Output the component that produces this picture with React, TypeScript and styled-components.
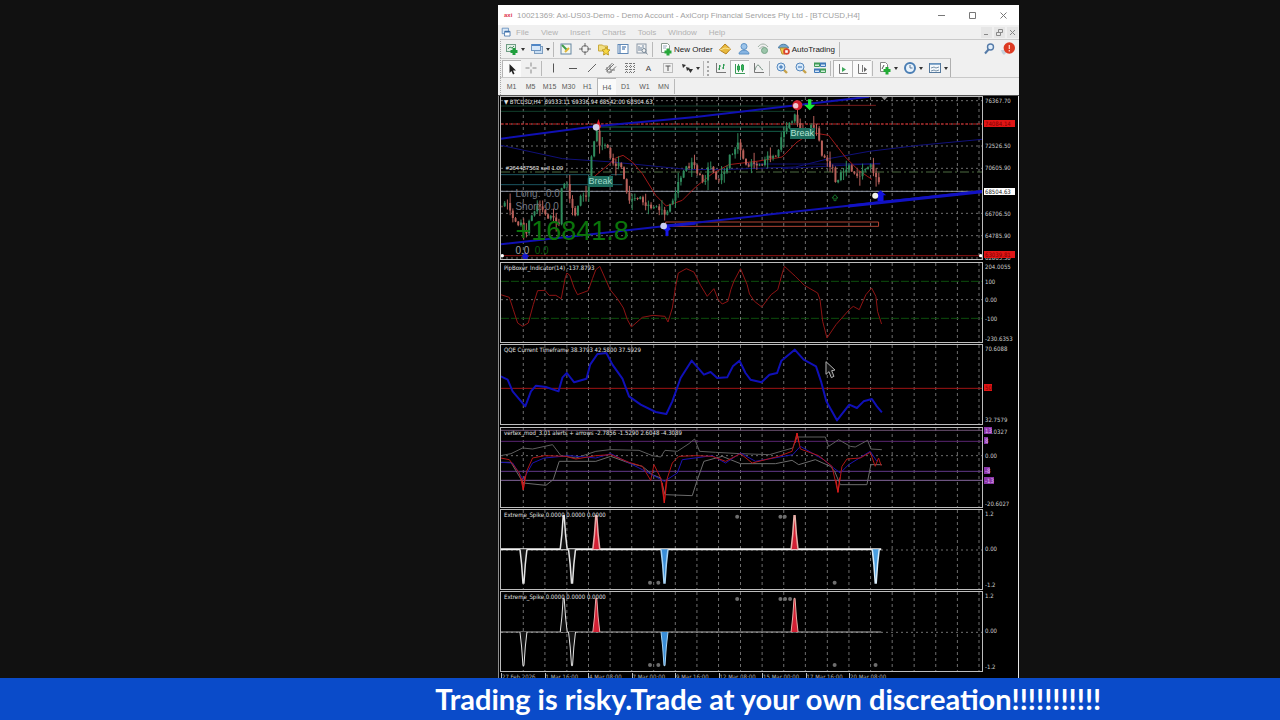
import React from "react";
import styled, { createGlobalStyle, css } from "styled-components";

const GlobalStyle = createGlobalStyle`
  * { box-sizing: border-box; }
  html, body, #root { height: 100%; }
  body { margin: 0; background: #111111; font-family: "Liberation Sans", Arial, sans-serif; }
  button { font: inherit; color: inherit; background: none; border: 0; padding: 0; margin: 0; }
`;

const UI_TEXT = "#444444";

const Screen = styled.div`
  display: flex;
  flex-direction: column;
  height: 100vh;
  overflow: hidden;
  background: #111111;
`;

const Stage = styled.main`
  flex: 1;
  min-height: 0;
  overflow: hidden;
  display: grid;
  grid-template-columns: 498fr 521fr 261fr;
  align-items: start;
  padding-top: 5px;
`;

const Terminal = styled.section`
  grid-column: 2;
  min-width: 0;
  background: #f0f0f0;
  color: ${UI_TEXT};
  font-size: 8px;
`;

const TitleBar = styled.header`
  display: flex;
  align-items: center;
  height: 20px;
  padding-left: 6px;
  background: #ffffff;
  color: #a2a2a2;
`;

const Brand = styled.span`
  width: 13px;
  font-size: 6px;
  font-weight: bold;
  color: #e0374f;
`;

const Title = styled.h1`
  flex: 1;
  margin: 0;
  font-size: 8px;
  font-weight: normal;
  white-space: nowrap;
`;

const WindowButton = styled.button`
  width: 31px;
  height: 20px;
  display: grid;
  place-items: center;
`;

const MenuBar = styled.nav`
  display: flex;
  align-items: center;
  gap: 12px;
  height: 14px;
  padding: 0 1px 0 3px;
  color: #b2b2b2;
`;

const MenuIcon = styled.span`
  display: grid;
  margin-right: -8px;
`;

const ChildButtons = styled.div`
  display: flex;
  gap: 2px;
  margin-left: auto;
`;

const ChildButton = styled.button`
  width: 11px;
  height: 11px;
  display: grid;
  place-items: center;
  background: #e6e6e6;
`;

const Toolbar = styled.div<{ $short?: boolean; $height: number }>`
  display: flex;
  align-items: center;
  height: ${(p) => p.$height}px;
  margin-left: 2px;
  border-top: 1px solid #c9c9c9;
  border-left: 1px dotted #a8a8a8;
  padding-left: 1px;
  ${(p) =>
    p.$short &&
    css`
      width: fit-content;
      border-right: 1px solid #b0b0b0;
    `}
`;

const Tool = styled.button<{ $pressed?: boolean; $width?: number }>`
  flex: none;
  display: flex;
  align-items: center;
  justify-content: center;
  gap: 1px;
  width: ${(p) => p.$width ?? 19}px;
  height: 17px;
  white-space: nowrap;
  ${(p) =>
    p.$pressed &&
    css`
      background: #fafafa;
      border-left: 1px solid #b5b5b5;
      border-top: 1px solid #b5b5b5;
    `}
`;

const TextTool = styled(Tool)`
  width: auto;
  padding: 0 3px 0 4px;
  color: #1a1a1a;
`;

const Divider = styled.span`
  flex: none;
  width: 1px;
  height: 15px;
  margin: 0 2px 0 1px;
  background: #b9b9b9;
`;

const Grip = styled.span`
  flex: none;
  height: 15px;
  margin: 0 2px 0 1px;
  border-left: 2px dotted #a8a8a8;
`;

const Caret = styled.span`
  width: 0;
  height: 0;
  margin-left: 1px;
  border: 2px solid transparent;
  border-top: 3px solid #333333;
  border-bottom: 0;
`;

const ToolEnd = styled.div`
  display: flex;
  margin-left: auto;
  padding-right: 2px;
`;

const Period = styled(Tool)`
  font-size: 7px;
  color: #5a5a5a;
`;

const Charts = styled.div`
  display: flex;
  flex-direction: column;
  gap: 1px;
  padding: 0 1px 0 2px;
  background: #000000;
  border-left: 1px solid #8d8d8d;
  border-right: 1px solid #e8e8e8;
  color: #e2e2e2;
  font: 6px/8px "DejaVu Sans Condensed", "DejaVu Sans", sans-serif;
`;

const ChartsFrame = styled.div`
  border-top: 1px solid #555555;
`;

const Pane = styled.figure<{ $gap?: boolean }>`
  margin: 0 0 ${(p) => (p.$gap ? 1 : 0)}px;
  display: grid;
  grid-template-columns: minmax(0, 1fr) 34px;
`;

const Plot = styled.div<{ $height: number }>`
  position: relative;
  height: ${(p) => p.$height + 2}px;
  border: 1px solid #bdbdbd;
  border-left-width: 0;
  box-shadow: -1px 0 0 #bdbdbd;
  overflow: hidden;
`;

const Canvas = styled.svg`
  display: block;
  width: 100%;
  height: 100%;
  fill: none;
  & * { vector-effect: non-scaling-stroke; }
`;

const Caption = styled.figcaption`
  position: absolute;
  top: 1px;
  left: 3px;
  white-space: pre;
`;

const Axis = styled.div`
  position: relative;
`;

const Tick = styled.span<{ $top: number; $bg?: string; $fg?: string; $narrow?: boolean }>`
  position: absolute;
  top: ${(p) => p.$top}px;
  left: 1px;
  width: ${(p) => (p.$bg && !p.$narrow ? "31px" : "auto")};
  padding-left: 1px;
  line-height: 7px;
  background: ${(p) => p.$bg ?? "transparent"};
  color: ${(p) => p.$fg ?? "#cfcfcf"};
`;

const Note = styled.span<{ $x: number; $y: number; $size: number; $color: string; $bg?: string }>`
  position: absolute;
  left: ${(p) => p.$x}%;
  top: ${(p) => p.$y}px;
  padding: ${(p) => (p.$bg ? "1px" : "0")};
  font: ${(p) => p.$size}px/1 "Liberation Sans", Arial, sans-serif;
  color: ${(p) => p.$color};
  background: ${(p) => p.$bg ?? "transparent"};
  white-space: nowrap;
`;

const TimeAxis = styled.div`
  display: grid;
  grid-template-columns: repeat(9, minmax(0, 13fr)) 27fr;
  padding-right: 34px;
  white-space: nowrap;
`;

const TimeLabel = styled.span`
  border-left: 1px solid #bdbdbd;
  height: 12px;
  color: #b5b5b5;
`;

const Banner = styled.footer`
  flex: none;
  height: 42px;
  padding-left: 34%;
  background: #0a4bc9;
  color: #ffffff;
  font: 700 29px/42px Lato, sans-serif;
  white-space: nowrap;
  overflow: hidden;
`;

/* ---------- icons ---------- */

const glyphs: Record<string, React.ReactNode> = {
  newChart: (<><rect x="1.5" y="2.5" width="9" height="7" fill="#dff0e4" stroke="#6f9c84" /><path d="M3 7l2-2 2 1 2-2" stroke="#4c8a63" /><path d="M9 6v7M5.500 9.500h7" stroke="#1f9e3c" strokeWidth="3" /></>),
  profiles: (<><rect x="4.500" y="4.500" width="8" height="7" fill="#c8ddf2" stroke="#7d9dbf" /><rect x="1.500" y="2.500" width="9" height="6" fill="#d6e7f8" stroke="#6f96c0" /><path d="M2 3h8" stroke="#4f86c6" strokeWidth="2" /></>),
  market: (<><rect x="2" y="2" width="10" height="10" fill="#f4f7ee" stroke="#6585a2" /><path d="M3 3l5 5" stroke="#3d9c4b" strokeWidth="2" /><path d="M6 10l4-4" stroke="#e0b637" strokeWidth="2" /></>),
  target: (<><circle cx="7" cy="7" r="3.500" stroke="#6d6d6d" /><path d="M7 1v4M7 9v4M1 7h4M9 7h4" stroke="#6d6d6d" /></>),
  favorites: (<><path d="M1.500 3h4l1 1h4v5h-9z" fill="#f2df83" stroke="#c9a93a" /><path d="M9 5l1.300 2.600 2.700.4-2 2 .5 3L9 11.600 6.500 13l.5-3-2-2 2.700-.4z" fill="#f7d743" stroke="#bf9c26" /></>),
  terminal: (<><rect x="2" y="2.500" width="10" height="9" fill="#fff" stroke="#5f87b5" /><path d="M4 3v8M6 5h4M6 7h3" stroke="#6d93c0" strokeWidth="1.400" /></>),
  tester: (<><rect x="2" y="2" width="9" height="9" fill="#f4f4f4" stroke="#8b98a6" /><path d="M4 4v5M6 5v4M8 3v3" stroke="#7388a0" /><circle cx="9" cy="8.500" r="2" stroke="#7b8b99" /><path d="M10.500 10l2 2.500" stroke="#7b8b99" /></>),
  order: (<><path d="M2.500 1.500h6l2 2v7h-8z" fill="#fff" stroke="#8b9b90" /><path d="M4 4h4M4 6h3" stroke="#9ab" /><path d="M9 6.500v7M5.500 10h7" stroke="#27a83a" strokeWidth="3" /></>),
  editor: (<><path d="M7 2l5.500 5L8 12 1.500 8z" fill="#e8b93c" stroke="#b7811f" /><path d="M2 8l5-2 5 1" stroke="#fbe391" /></>),
  person: (<><circle cx="7" cy="4.500" r="3" fill="#9cc4ea" stroke="#5c92c6" /><path d="M2 12c0-5 10-5 10 0z" fill="#86b4e2" stroke="#5c92c6" /></>),
  signal: (<><path d="M2 5c3-4 7-4 10 0M3.500 7c2-3 5-3 7 0" stroke="#a0b0a5" /><circle cx="8.500" cy="8.500" r="3" fill="#9bc5aa" stroke="#76a487" /></>),
  auto: (<><path d="M1.500 6c1-5 9-5 10 0z" fill="#72a6ce" stroke="#4b7ba3" /><path d="M3 6h7l-2 6H5z" fill="#efcb4d" stroke="#b79333" /><circle cx="9.500" cy="9.500" r="3.300" fill="#d8442f" /><rect x="8.200" y="8.200" width="2.600" height="2.600" fill="#fff" /></>),
  search: (<><circle cx="8.500" cy="5" r="3" fill="#e3effb" stroke="#557ba8" strokeWidth="1.400" /><path d="M6.500 7.500L3 11.500" stroke="#557ba8" strokeWidth="2" /></>),
  cursor: (<path d="M4.500 2v9l2-2 1.500 3.500 1.500-.7L8 8.500h3z" fill="#222" />),
  cross: (<path d="M7 1.500v4M7 8.500v4M1.500 7h4M8.500 7h4" stroke="#888" />),
  vline: (<path d="M6.500 2.500v9" stroke="#555" />),
  hline: (<path d="M3 7.500h8" stroke="#555" />),
  trend: (<path d="M3 11l8-8" stroke="#666" />),
  channel: (<path d="M1.500 9l7-7M5 12.500l7-7M3 10l7-7M3 6v5h5M6 4v5h5" stroke="#777" />),
  fibo: (<path d="M2 2.500h10M2 5.500h10M2 8.500h10M2 11.500h10M3.500 2v10M7.500 2v10M11.500 2v10" stroke="#777" strokeDasharray="1 1" />),
  label: (<><rect x="2.500" y="2.500" width="9" height="9" stroke="#888" strokeDasharray="1 1" /><path d="M4.500 5h5M7 5v5" stroke="#555" /></>),
  arrows: (<path d="M2 3l4 1-3 3zM6 6l4 1-3 3zM8 8h5l-2.500 4z" fill="#333" />),
  bars: (<><path d="M2.500 2v9.500H12" stroke="#777" /><path d="M5.500 4v5M4 8h1.500M5.500 5H7M9.500 3v5M8 7h1.500M9.500 4H11" stroke="#2c9b52" /></>),
  candles: (<><path d="M2.500 2v9.500H12M5.500 2v8M9.500 2v8" stroke="#3c9a5a" /><path d="M4.500 4h2v4h-2zM8.500 3h2v5h-2z" fill="#35b35a" stroke="#2ca04e" /></>),
  line: (<><path d="M2.500 2v9.500H12" stroke="#777" /><path d="M3 9c2-7 4-5 5-3s2 2 3 3" stroke="#6c8c7a" /></>),
  zoomIn: (<><path d="M8 8l4 4" stroke="#c6a24a" strokeWidth="2.400" /><circle cx="6" cy="6" r="4" fill="#d7e9fa" stroke="#5688bd" /><path d="M4 6h4M6 4v4" stroke="#2d6bb0" /></>),
  zoomOut: (<><path d="M8 8l4 4" stroke="#c6a24a" strokeWidth="2.400" /><circle cx="6" cy="6" r="4" fill="#d7e9fa" stroke="#5688bd" /><path d="M4 6h4" stroke="#2d6bb0" /></>),
  tile: (<><path d="M1.500 2.500h5v3h-5zM7.500 8.500h5v3h-5z" fill="#cfeed6" stroke="#3f9a58" /><path d="M7.500 2.500h5v3h-5zM1.500 8.500h5v3h-5z" fill="#d3e4f7" stroke="#3f78b8" /><path d="M1 2.500h6M7 8.500h6" stroke="#3f9a58" strokeWidth="2" /><path d="M7 2.500h6M1 8.500h6" stroke="#3f78b8" strokeWidth="2" /></>),
  scroll: (<><path d="M3.500 2v9.500H12" stroke="#777" /><path d="M6 5v5l4-2.500z" fill="#3da85a" /></>),
  shift: (<><path d="M3.500 2v9.500H12M7.500 3v7" stroke="#777" /><path d="M9 5l3 2.500L9 10z" fill="#666" /></>),
  indicator: (<><path d="M2.500 1.500h5l2 2v7h-7z" fill="#fff" stroke="#888" /><path d="M4 8l2-4" stroke="#555" /><path d="M9 6v7.500M5.500 9.500h7" stroke="#23ab36" strokeWidth="3" /></>),
  clock: (<><circle cx="7" cy="7" r="5" fill="#e9f3fc" stroke="#4a7eb4" strokeWidth="2" /><path d="M7 4v3h2.500" stroke="#5a7795" /></>),
  template: (<><rect x="1.500" y="2.500" width="11" height="9" fill="#f2f7fb" stroke="#55799d" /><path d="M2 3h10" stroke="#6c98c4" strokeWidth="1.600" /><path d="M3 7l3-1 2 1 3-1M3 10l3-1 2 1 3-1" stroke="#7892aa" /></>),
  windows: (<><path d="M1.500 1.500h8v7h-8z" fill="#dbe9f7" stroke="#5a86b8" /><path d="M4.500 5.500h7v6h-7z" fill="#fff" stroke="#3c6ea8" /><path d="M5 6h6" stroke="#3c6ea8" strokeWidth="2" /></>),
  alert: (<><path d="M0 8h5v3l-2 2-2-2z" fill="#c5d1dc" /><circle cx="8.300" cy="6" r="5.700" fill="#dd3a22" /><path d="M8.300 3v4M8.300 8v1.500" stroke="#ffd9cf" strokeWidth="1.200" /></>),
};

const Glyph = ({ name, size = 14 }: { name: string; size?: number }) => (
  <svg width={size} height={size} viewBox="0 0 14 14" fill="none" aria-hidden="true">
    {glyphs[name]}
  </svg>
);

const IconTool = ({ name, label, pressed, menu }: { name: string; label: string; pressed?: boolean; menu?: boolean }) => (
  <Tool aria-label={label} aria-pressed={pressed} $pressed={pressed} $width={menu ? 25 : 19}>
    <Glyph name={name} />
    {menu && <Caret />}
  </Tool>
);

/* ---------- chart data; drawing units are thirds of a pixel ---------- */

const LEFT = 15;
const WIDTH = 1446;
const gridX = Array.from({ length: 22 }, (_, i) => Math.round(82 + i * 65.25));

type Point = [number, number];
const path = (p: Point[]) => "M" + p.map(([x, y]) => `${x} ${y}`).join("L");

const price: Point[] = [
  [15, 345], [25, 325], [40, 350], [55, 388], [75, 395], [88, 440], [95, 400], [110, 360], [135, 340], [150, 370],
  [180, 385], [191, 400], [197, 285], [210, 270], [225, 330], [238, 370], [250, 322], [275, 305], [283, 210],
  [295, 150], [301, 115], [312, 158], [335, 160], [346, 215], [375, 215], [385, 265], [395, 318], [430, 320],
  [470, 350], [495, 345], [508, 372], [525, 340], [550, 268], [572, 225], [592, 210], [605, 245], [627, 270],
  [642, 215], [662, 262], [692, 240], [703, 190], [730, 155], [747, 215], [792, 220], [812, 200], [842, 190],
  [867, 115], [898, 70], [906, 100], [925, 112], [965, 105], [977, 180], [992, 210], [1012, 225], [1022, 275],
  [1042, 240], [1062, 220], [1082, 260], [1107, 230], [1127, 225], [1142, 250], [1158, 290],
];

const priceAt = (x: number) => {
  const i = Math.max(1, price.findIndex(([px]) => px >= x));
  const [x0, y0] = price[i - 1];
  const [x1, y1] = price[i];
  return y0 + ((y1 - y0) * (x - x0)) / (x1 - x0);
};

const candles = Array.from({ length: 140 }, (_, i) => {
  const x = 18 + i * 8.15;
  const wave = (n: number) => Math.sin(n * 2.3) * 5 + Math.cos(n * 5.1) * 4;
  const open = priceAt(Math.max(15, x - 8)) + wave(i - 1);
  const close = priceAt(x) + wave(i);
  const reach = 3 + Math.pow(Math.sin(i * 3.7), 4) * 26;
  const lift = i % 2 ? 1 : 0.5;
  return { x, open, close, high: Math.min(open, close) - reach * lift, low: Math.max(open, close) + reach * (1.5 - lift) };
});

const boxer: Point[] = [
  [14, 110], [40, 118], [52, 155], [65, 195], [80, 205], [97, 195], [112, 140], [125, 98], [147, 97], [160, 112], [180, 112],
  [196, 122], [208, 60], [213, 45], [222, 52], [235, 90], [245, 110], [277, 98], [290, 62], [300, 35], [312, 25], [343, 95],
  [365, 122], [383, 150], [395, 185], [407, 207], [440, 178], [472, 172], [508, 175], [517, 192], [530, 150], [540, 85],
  [548, 45], [572, 32], [595, 42], [615, 82], [635, 115], [655, 92], [668, 125], [680, 138], [697, 130], [706, 95], [715, 70],
  [735, 32], [755, 80], [762, 108], [777, 130], [799, 147], [827, 110], [847, 95], [858, 55], [867, 25], [900, 55], [927, 82],
  [967, 105], [974, 125], [982, 190], [995, 240], [1022, 200], [1062, 155], [1074, 145], [1092, 155], [1112, 110], [1129, 90],
  [1142, 115], [1147, 160], [1159, 198],
];

const qqe: Point[] = [
  [14, 355], [35, 365], [50, 400], [88, 445], [105, 400], [120, 383], [150, 387], [188, 400], [200, 358], [213, 345], [235, 373],
  [272, 362], [283, 320], [305, 288], [332, 285], [350, 320], [380, 362], [400, 415], [435, 440], [480, 462], [512, 468],
  [530, 430], [555, 360], [588, 308], [625, 350], [645, 342], [665, 360], [695, 358], [712, 325], [732, 308], [750, 345],
  [765, 365], [798, 373], [822, 350], [845, 345], [858, 308], [898, 275], [925, 305], [962, 325], [977, 370], [993, 430],
  [1025, 487], [1062, 440], [1085, 450], [1105, 430], [1130, 423], [1145, 445], [1160, 463],
];

const bandTop: Point[] = [
  [14, 98], [45, 92], [80, 75], [110, 78], [170, 65], [195, 98], [240, 105], [300, 85], [343, 80], [430, 82], [470, 98],
  [495, 102], [508, 82], [545, 85], [580, 62], [597, 48], [612, 85], [660, 88], [735, 92], [822, 95], [892, 75], [905, 42],
  [990, 42], [1000, 70], [1030, 50], [1065, 70], [1080, 72], [1117, 52], [1127, 78], [1160, 80],
];
const bandBottom: Point[] = [
  [14, 118], [45, 118], [82, 180], [150, 187], [172, 170], [190, 115], [300, 115], [345, 100], [400, 120], [440, 130], [470, 155],
  [495, 165], [508, 215], [590, 218], [602, 180], [625, 115], [680, 100], [735, 122], [840, 122], [890, 112], [910, 125],
  [960, 110], [1005, 130], [1018, 145], [1035, 185], [1115, 185], [1127, 125], [1160, 125],
];
const vertexRed: Point[] = [
  [14, 105], [40, 110], [70, 150], [82, 200], [92, 145], [110, 105], [145, 98], [210, 100], [240, 108], [300, 98], [345, 95],
  [400, 118], [440, 130], [465, 172], [475, 125], [495, 165], [506, 240], [515, 165], [530, 120], [550, 100], [600, 98],
  [650, 100], [690, 115], [735, 92], [770, 120], [850, 100], [890, 85], [905, 30], [915, 78], [970, 98], [1010, 130],
  [1028, 208], [1040, 130], [1055, 108], [1095, 105], [1125, 88], [1140, 130], [1150, 105], [1158, 128],
];
const vertexBlue: Point[] = [
  [14, 118], [50, 120], [82, 170], [110, 120], [145, 105], [220, 98], [300, 105], [345, 92], [440, 140], [506, 175], [545, 150],
  [560, 110], [650, 98], [690, 120], [735, 90], [780, 115], [892, 95], [915, 70], [985, 110], [1015, 135], [1035, 150],
  [1060, 125], [1125, 85], [1145, 115],
];

const average: Point[] = [
  [285, 262], [330, 225], [360, 198], [382, 190], [410, 210], [440, 245], [480, 310], [512, 342], [560, 325], [600, 285],
  [650, 245], [700, 218], [790, 207], [860, 195], [905, 150], [950, 122], [1000, 130], [1050, 195], [1090, 235], [1130, 262],
];

const Grid = ({ top, height, rows = [] }: { top: number; height: number; rows?: number[] }) => (
  <g stroke="#6e6e6e" strokeDasharray="3 3">
    {gridX.map((x) => <path key={x} d={`M${x} ${top}v${height}`} />)}
    {rows.map((y) => <path key={y} d={`M${LEFT} ${y}h${WIDTH}`} strokeDasharray="2 3" />)}
  </g>
);

interface TickData { at: number; text: string; bg?: string; fg?: string; narrow?: boolean }
interface PaneProps {
  top: number;
  height: number;
  title: string;
  rows?: number[];
  ticks: TickData[];
  gap?: boolean;
  children: React.ReactNode;
  notes?: React.ReactNode;
}

const ChartPane = ({ top, height, title, rows, ticks, gap, children, notes }: PaneProps) => (
  <Pane $gap={gap}>
    <Plot $height={height}>
      <Canvas viewBox={`${LEFT} ${top} ${WIDTH} ${height * 3}`} preserveAspectRatio="none" aria-hidden="true">
        <Grid top={top} height={height * 3} rows={rows} />
        {children}
      </Canvas>
      <Caption>{title}</Caption>
      {notes}
    </Plot>
    <Axis>
      {ticks.map((t) => (
        <Tick key={t.text} $top={t.at} $bg={t.bg} $fg={t.fg} $narrow={t.narrow}>{t.text}</Tick>
      ))}
    </Axis>
  </Pane>
);

interface SpikeData { x: number; dir: 1 | -1; fill: string; stroke: string }

const Spikes = ({ base, bold, items }: { base: number; bold?: boolean; items: SpikeData[] }) => (
  <>
    <path d={`M${LEFT} ${base}H1158`} stroke={bold ? "#f2f2f2" : "#b0b0b0"} strokeWidth={bold ? 2 : 1} />
    {items.map(({ x, dir, fill, stroke }) => (
      <path
        key={x}
        d={`M${x - 10} ${base}l5 ${dir * 45} 4 ${dir * 56}h3l4 ${dir * -56} 5 ${dir * -45}`}
        fill={fill}
        stroke={stroke}
        strokeWidth={bold ? 1.5 : 1}
      />
    ))}
  </>
);

const spikes: SpikeData[] = [
  { x: 82, dir: 1, fill: "#151515", stroke: "#e4e4e4" },
  { x: 203, dir: -1, fill: "#101010", stroke: "#e4e4e4" },
  { x: 228, dir: 1, fill: "#151515", stroke: "#e4e4e4" },
  { x: 301, dir: -1, fill: "#d32034", stroke: "#e8a8a8" },
  { x: 506, dir: 1, fill: "#3a8ed8", stroke: "#a8d4f4" },
  { x: 897, dir: -1, fill: "#d32034", stroke: "#e8b0a8" },
];
const lastSpike: SpikeData = { x: 1141, dir: 1, fill: "#4a9ee0", stroke: "#d8ecfa" };

const Dots = ({ points }: { points: Point[] }) => (
  <g fill="#6e6e6e">
    {points.map(([x, y]) => <circle key={`${x}-${y}`} cx={x} cy={y} r="6" />)}
  </g>
);

const menus = ["File", "View", "Insert", "Charts", "Tools", "Window", "Help"];
const periods = ["M1", "M5", "M15", "M30", "H1", "H4", "D1", "W1", "MN"];
const dates = [
  "27 Feb 2026", "1 Mar 16:00", "4 Mar 08:00", "7 Mar 00:00", "9 Mar 16:00",
  "12 Mar 08:00", "15 Mar 00:00", "17 Mar 16:00", "20 Mar 08:00",
];

const RED = "#e01515";
const PURPLE = "#8a35a8";

export default function App() {
  return (
    <Screen>
      <GlobalStyle />
      <Stage>
        <Terminal>
          <TitleBar>
            <Brand>axi</Brand>
            <Title>10021369: Axi-US03-Demo - Demo Account - AxiCorp Financial Services Pty Ltd - [BTCUSD,H4]</Title>
            <WindowButton aria-label="Minimize">
              <svg width="9" height="9" stroke="#777"><path d="M1 4.500h7" /></svg>
            </WindowButton>
            <WindowButton aria-label="Maximize">
              <svg width="9" height="9" fill="none" stroke="#777"><path d="M1.500 1.500h6v6h-6z" /></svg>
            </WindowButton>
            <WindowButton aria-label="Close">
              <svg width="9" height="9" stroke="#777"><path d="M1.500 1.500l6 6M7.500 1.500l-6 6" /></svg>
            </WindowButton>
          </TitleBar>
          <MenuBar>
            <MenuIcon><Glyph name="windows" size={11} /></MenuIcon>
            {menus.map((m) => <button key={m}>{m}</button>)}
            <ChildButtons>
              <ChildButton aria-label="Minimize chart"><svg width="7" height="7" stroke="#888"><path d="M1 5.500h4" /></svg></ChildButton>
              <ChildButton aria-label="Restore chart"><svg width="7" height="7" fill="none" stroke="#888"><path d="M2.500.500h4v3h-4zM.500 3.500h4v3h-4z" /></svg></ChildButton>
              <ChildButton aria-label="Close chart"><svg width="7" height="7" stroke="#888"><path d="M1 1l5 5M6 1L1 6" /></svg></ChildButton>
            </ChildButtons>
          </MenuBar>

          <Toolbar $height={19}>
            <IconTool name="newChart" label="New chart" menu />
            <IconTool name="profiles" label="Profiles" menu />
            <Divider />
            <IconTool name="market" label="Market Watch" />
            <IconTool name="target" label="Data Window" />
            <IconTool name="favorites" label="Navigator" />
            <IconTool name="terminal" label="Terminal" />
            <IconTool name="tester" label="Strategy Tester" />
            <Divider />
            <TextTool><Glyph name="order" />New Order</TextTool>
            <IconTool name="editor" label="MetaEditor" />
            <IconTool name="person" label="Account" />
            <IconTool name="signal" label="Signals" />
            <TextTool><Glyph name="auto" />AutoTrading</TextTool>
            <Divider />
            <ToolEnd>
              <IconTool name="search" label="Search" />
              <IconTool name="alert" label="Notifications" />
            </ToolEnd>
          </Toolbar>

          <Toolbar $height={19} $short>
            <IconTool name="cursor" label="Cursor" pressed />
            <IconTool name="cross" label="Crosshair" />
            <Divider />
            <IconTool name="vline" label="Vertical line" />
            <IconTool name="hline" label="Horizontal line" />
            <IconTool name="trend" label="Trendline" />
            <IconTool name="channel" label="Equidistant channel" />
            <IconTool name="fibo" label="Fibonacci" />
            <Tool>A</Tool>
            <IconTool name="label" label="Text label" />
            <IconTool name="arrows" label="Arrows" menu />
            <Divider />
            <Grip />
            <IconTool name="bars" label="Bar chart" />
            <IconTool name="candles" label="Candlesticks" pressed />
            <IconTool name="line" label="Line chart" />
            <Divider />
            <IconTool name="zoomIn" label="Zoom in" />
            <IconTool name="zoomOut" label="Zoom out" />
            <IconTool name="tile" label="Tile windows" />
            <Divider />
            <IconTool name="scroll" label="Auto scroll" pressed />
            <IconTool name="shift" label="Chart shift" pressed />
            <Divider />
            <IconTool name="indicator" label="Indicators" menu />
            <IconTool name="clock" label="Periods" menu />
            <IconTool name="template" label="Templates" menu />
          </Toolbar>

          <Toolbar $height={18}>
            {periods.map((p) => <Period key={p} $pressed={p === "H4"} aria-pressed={p === "H4"}>{p}</Period>)}
            <Divider />
          </Toolbar>

          <ChartsFrame>
            <Charts>
              <ChartPane
                top={15}
                height={162}
                gap
                title="▼ BTCUSD,H4  69333.11 69336.94 68542.00 68504.63"
                rows={[26, 96, 162, 229, 298, 364, 431, 498]}
                ticks={[
                  { at: 1, text: "76367.70" },
                  { at: 24, text: "74084.14", bg: RED, fg: "#7a0000" },
                  { at: 46, text: "72526.50" },
                  { at: 68, text: "70605.90" },
                  { at: 92, text: "68504.63", bg: "#ffffff", fg: "#222222" },
                  { at: 114, text: "66706.50" },
                  { at: 136, text: "64785.90" },
                  { at: 158, text: "62865.30" },
                  { at: 155, text: "63039.81", bg: RED, fg: "#7a0000" },
                ]}
                notes={
                  <>
                    <Note $x={1} $y={68} $size={6} $color="#e8e8e8">#264487563 sell 1.00</Note>
                    <Note $x={3} $y={92} $size={10} $color="#737982">Long:&nbsp; 0.0</Note>
                    <Note $x={3} $y={105} $size={10} $color="#737982">Short: 0.0</Note>
                    <Note $x={3} $y={121} $size={27} $color="#0b740b">+16841.8</Note>
                    <Note $x={3} $y={149} $size={10} $color="#a0a0a0">0.0</Note>
                    <Note $x={7} $y={149} $size={10} $color="#0c5c0c">0.0</Note>
                    <Note $x={18} $y={79} $size={9} $color="#9fd8c8" $bg="#1c6b5c">Break</Note>
                    <Note $x={60} $y={31} $size={9} $color="#b4e4d4" $bg="#1c6b5c">Break</Note>
                  </>
                }
              >
                <path d="M15 42H905M15 58H900" stroke="#123f2c" />
                <path d="M300 105H885M300 118H885" stroke="#14604a" />
                <path d="M15 248H285M15 278H380M345 248H380" stroke="#1b5560" />
                <path d="M15 240H1461" stroke="#4c6b40" strokeDasharray="9 3 2 3" />
                <path d="M15 96H1461" stroke="#c81c1c" strokeDasharray="3 1" />
                <path d="M960 40H1142" stroke="#7a1c1c" />
                <path d="M15 491H1461" stroke="#8f1414" />
                <path d="M15 298H1461" stroke="#8f96a3" />
                <path d="M15 160L200 200 350 210 582 233 700 232 900 225 1000 200 1122 178 1270 160 1461 142" stroke="#10107a" />
                <path d="M750 216H1155M860 230L1155 214" stroke="#0d0d70" />
                <path d={path(average)} stroke="#a01818" />
                {candles.map((c) => {
                  const up = c.close < c.open;
                  return (
                    <g key={c.x} stroke={up ? "#2f8a5c" : "#b8605a"}>
                      <path d={`M${c.x} ${c.high}V${c.low}`} />
                      <path d={`M${c.x} ${c.open}V${c.close}`} strokeWidth="2" />
                    </g>
                  );
                })}
                <path d="M510 390H1150V403H510z" stroke="#b04434" />
                <path d="M15 140L300 103 600 75 1122 14M15 457L510 402 1182 328 1461 297" stroke="#1010b4" strokeWidth="2" />
                <path d="M510 402L600 394M1060 342L1461 299" stroke="#1212c4" strokeWidth="3" />
                <path d="M300 105l8-24 8 24-8 8z" fill="#e01c2c" />
                <circle cx="301" cy="106" r="10" fill="#d0d0e8" />
                <path d="M514 432v-24M506 414l8-10 8 10" stroke="#1818e8" strokeWidth="3" />
                <circle cx="504" cy="402" r="10" fill="#c8ccf0" />
                <circle cx="906" cy="40" r="15" fill="#d02030" />
                <circle cx="901" cy="41" r="8" fill="#f0c8d0" />
                <path d="M938 22h10v16h12l-17 17-17-17h12z" fill="#18e838" />
                <path d="M1019 308l-9 10h6v8h6v-8h6z" stroke="#17702a" />
                <path d="M1156 295l17 15h-8v17h-18v-17h-8z" fill="#1212e0" />
                <circle cx="1140" cy="311" r="9" fill="#f2f2e8" />
                <path d="M88 480l12 14h-5v10H81v-10h-5z" fill="#1616c8" />
                <path d="M1158 14h20l-10 11z" fill="#8c8c8c" />
                <circle cx="1457" cy="491" r="5" fill="#ffffff" />
                <circle cx="19" cy="491" r="5" fill="#ffffff" />
              </ChartPane>

              <ChartPane
                top={15}
                height={79}
                title="PipBoxer_Indicator(14) -137.8793"
                rows={[125]}
                ticks={[
                  { at: 1, text: "204.0055" },
                  { at: 16, text: "100" },
                  { at: 34, text: "0.00" },
                  { at: 53, text: "-100" },
                  { at: 73, text: "-230.6353" },
                ]}
              >
                <path d="M15 70H1461M15 181H1461" stroke="#0d4f0d" strokeDasharray="8 2" />
                <path d={path(boxer)} stroke="#8f1414" />
              </ChartPane>

              <ChartPane
                top={261}
                height={79}
                gap
                title="QQE Current Timeframe 38.3793 42.5800 37.5929"
                ticks={[
                  { at: 1, text: "70.6088" },
                  { at: 40, text: "50", bg: RED, fg: "#7a0000", narrow: true },
                  { at: 72, text: "32.7579" },
                ]}
              >
                <path d="M15 391H1461" stroke="#a01414" />
                <path d={path(qqe)} stroke="#1010b8" strokeWidth="2" strokeLinejoin="round" />
                <path d="M992 311v38l9-8 7 18 8-4-7-17 10-2z" fill="#141414" stroke="#b4b4b4" />
              </ChartPane>

              <ChartPane
                top={15}
                height={79}
                title="vertex_mod_3.01 alerts + arrows -2.7856 -1.5290 2.6048 -4.3089"
                rows={[98]}
                ticks={[
                  { at: 1, text: "11.0327" },
                  { at: 0, text: "13", bg: PURPLE, fg: "#e0b8f0", narrow: true },
                  { at: 10, text: "8", bg: PURPLE, fg: "#e0b8f0", narrow: true },
                  { at: 25, text: "0.00" },
                  { at: 40, text: "-8", bg: PURPLE, fg: "#e0b8f0", narrow: true },
                  { at: 50, text: "-13", bg: PURPLE, fg: "#e0b8f0", narrow: true },
                  { at: 73, text: "-20.6027" },
                ]}
              >
                <path d="M15 22H1461" stroke="#6a5070" />
                <path d="M15 55H1461" stroke="#5a2572" />
                <path d="M15 145H1461" stroke="#62388a" />
                <path d="M15 172H1461" stroke="#84659c" />
                <path d={path(bandTop)} stroke="#5e5e5e" />
                <path d={path(bandBottom)} stroke="#6c6c6c" />
                <path d={path(vertexBlue)} stroke="#1c12b0" />
                <path d={path(vertexRed)} stroke="#b01616" />
                <path d="M78 165l4 36 5-42M500 180l6 60 6-70M899 60l6-30 5 28M1022 170l6 38 6-45" stroke="#d81c1c" />
              </ChartPane>

              <ChartPane
                top={261}
                height={79}
                title="Extreme_Spike 0.0000 0.0000 0.0000"
                rows={[381]}
                ticks={[{ at: 1, text: "1.2" }, { at: 36, text: "0.00" }, { at: 72, text: "-1.2" }]}
              >
                <Spikes base={379} bold items={[...spikes, lastSpike]} />
                <Dots points={[[725, 281], [855, 281], [868, 281], [463, 479], [488, 479], [1018, 479]]} />
              </ChartPane>

              <ChartPane
                top={15}
                height={79}
                title="Extreme_Spike 0.0000 0.0000 0.0000"
                rows={[136]}
                ticks={[{ at: 1, text: "1.2" }, { at: 36, text: "0.00" }, { at: 72, text: "-1.2" }]}
              >
                <Spikes base={135} items={spikes} />
                <Dots points={[[725, 36], [855, 36], [869, 36], [884, 36], [463, 234], [488, 234], [1018, 234], [1141, 234]]} />
              </ChartPane>

              <TimeAxis>
                {dates.map((d) => <TimeLabel key={d}>{d}</TimeLabel>)}
              </TimeAxis>
            </Charts>
          </ChartsFrame>
        </Terminal>
      </Stage>
      <Banner>Trading is risky.Trade at your own discreation!!!!!!!!!!!</Banner>
    </Screen>
  );
}
